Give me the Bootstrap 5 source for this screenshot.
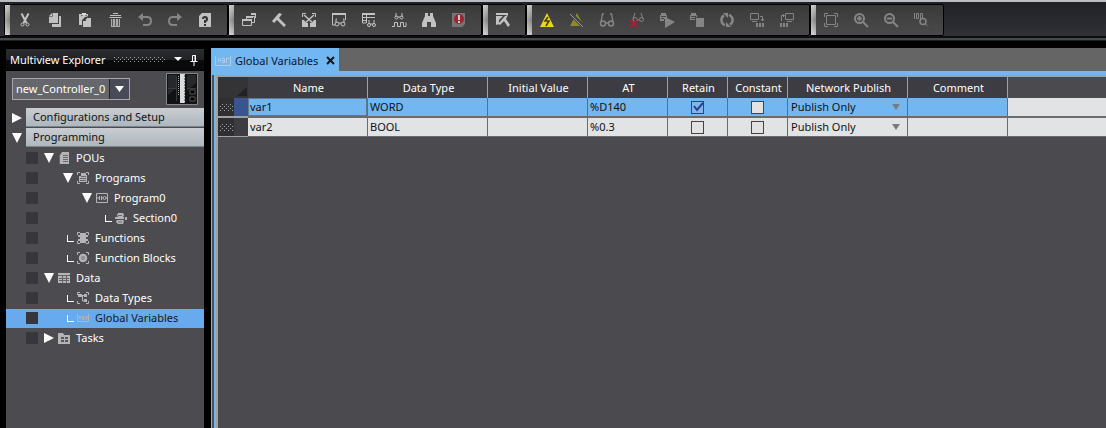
<!DOCTYPE html>
<html lang="en">
<head>
<meta charset="utf-8">
<meta name="viewport" content="width=device-width, initial-scale=1">
<title>Global Variables</title>
<link href="https://cdn.jsdelivr.net/npm/bootstrap@5.3.0/dist/css/bootstrap.min.css" rel="stylesheet">
<style>
body{background:#000;color:#fff;font-family:"Noto Sans","Open Sans",sans-serif;font-size:11px;line-height:16px}
svg{display:block;fill:none;stroke:currentColor}
button{background:none;border:0;padding:0;color:inherit}
.toolbar{height:41px;background:linear-gradient(#b9bcc3 0 2px,#202126 2px,#303137 36px,#0b0c0d 36px 38px,#454a4b 38px 40px,#1c1f1f 40px);padding:4px 0 0 4px}
.tool-group{height:32px;border:1px solid #000;border-radius:2px;background:linear-gradient(#3a3a3a,#4a4a4a);padding-right:7px}
.grip{width:5px;background:linear-gradient(90deg,rgba(255,255,255,.3),transparent),linear-gradient(#bbb,#808080 50%,#c4c4c4)}
.tool{width:30px;color:#c2c2c2;display:flex;align-items:center;justify-content:center}
.tool:disabled{color:#858585}
.tool svg{width:16px;height:16px}
.workspace{padding:7px 0 0 6px}
.explorer{width:198px;background:#4c4b50;margin-right:7px;padding-top:1px;box-shadow:inset 0 1px #000}
.explorer-title{height:22px;background:linear-gradient(#2c2d30,#222326 50%,#0a0a0b 55%,#08090a);border-bottom:1px solid #000;padding:0 6px 0 4px}
.controller{height:37px;padding:2px 6px 0}
.controller-select{width:118px;height:22px;margin-top:5px;border:1px solid #a7a7a9;border-radius:0;color:#fff;padding:0 0 1px 3px;font-size:11px;appearance:none;background:url("data:image/svg+xml,%3Csvg xmlns='http://www.w3.org/2000/svg' width='20' height='20'%3E%3Cpath d='M0 0h20v20H0z' fill='%23484b57'/%3E%3Cpath d='M0 0h1v20H0z' fill='%23222'/%3E%3Cpath d='M6 7h9l-4.500 6z' fill='%23fff'/%3E%3C/svg%3E") right/20px 20px no-repeat #66676c}
.section-row{height:20px;padding-left:6px}
.section-row .label{height:19px;margin-left:4px;padding-left:7px;background:linear-gradient(#c9cdd1,#adb7be);color:#111;border-bottom:1px solid #7d858c;text-align:left}
.arrow{width:10px;height:12px;flex:none}
.arrow svg{width:10px;height:12px;fill:#fff;stroke:none}
.tree{margin:0;padding:0;list-style:none}
.tree li{height:20px;padding:0 0 0 20px;display:flex;align-items:center}
.tree li::before{content:"";width:12px;height:12px;background:#37363c;flex:none;margin-right:6px}
.tree a{color:#fff;text-decoration:none}
.tree .selected{background:linear-gradient(#4c4b50 1px,#68aaee 1px)}
.tree .selected a{color:#101820}
.ind1{margin-left:19px}.ind2{margin-left:38px}
.node-icon{width:12px;height:12px;margin:0 6px 0 4px;color:#b5b5b7;flex:none}
.elbow{width:7px;height:7px;border:solid #fff;border-width:0 0 1px 1px;flex:none;margin-right:3px;margin-left:23px}
.elbow + .node-icon{margin-left:0}
.elbow.deep{margin-left:61px}
.tabs{height:23px;background:#656565}
.tab{width:128px;height:23px;background:#72b7f2;color:#10161c;padding:2px 4px 0}
.tab .name{margin-left:4px}
.var-icon{color:#b5cce0}
.editor{background:#4b4a4f;border-left:1px solid #72b7f2}
.editor-inner{border-left:2px solid #4b5158}
.band-top{border-top:4px solid #72b7f2}
.band-left{border-left:2px solid #72b7f2}
.grid-wrap{border:solid #a0a1a3;border-width:2px 0 0 2px}
.vars{width:100%;table-layout:fixed;border-collapse:separate;border-spacing:0;color:#111}
.vars th{height:21px;background:#3c3c42;color:#fff;font-weight:400;text-align:center;padding:0 0 0 2px;border-right:1px solid #a0a0a0;white-space:nowrap}
.vars th:last-child{background:#4b4a4f;border:0}
.vars th:first-child,.vars th.corner{background:#343437;border:0}
.vars td{height:20px;padding:0 0 0 2px;background:#e2e3e5;border-right:1px solid #6b6b6e;border-bottom:2px solid #6b6b6e;white-space:nowrap}
.vars td:last-child{border-right:0}
.vars tr:last-child td{height:19px;border-bottom-width:1px}
.vars .current td{background:#72b7f2}
.vars .current td:last-child{background:#e2e3e5}
.vars td.handle,.vars .current td.handle{background:#2f2f31;border-right:0;padding:0;border-bottom-color:#a0a0a0}
.vars td.marker{background:#3c3c42;border-right:0;border-bottom-color:#a0a0a0}
.vars .current td.marker{background:#39548f}
.vars td.editing{box-shadow:inset 0 0 0 1px #62788b}
.vars td.tick{padding:0;text-align:center}
.tick input{appearance:none;display:block;width:13px;height:13px;margin:0 auto;border:1px solid #444;background:#e2e2e2}
.tick input:checked{background:url("data:image/svg+xml,%3Csvg xmlns='http://www.w3.org/2000/svg' viewBox='0 0 11 11'%3E%3Cpath d='M2 4l3 4 6-7' fill='none' stroke='%23253f94' stroke-width='2'/%3E%3C/svg%3E") #83b5e6}
.publish{width:100%;height:16px;border:0;padding:0 0 0 1px;color:#111;font-size:11px;line-height:16px;appearance:none;display:block;background:url("data:image/svg+xml,%3Csvg xmlns='http://www.w3.org/2000/svg' width='8' height='6'%3E%3Cpath d='M0 0h8l-4 6z' fill='%23777c82'/%3E%3C/svg%3E") right 7px center no-repeat transparent}
</style>
</head>
<body class="vh-100 d-flex flex-column overflow-hidden">
<svg width="0" height="0" class="position-absolute" aria-hidden="true"><defs>
<pattern id="dotFill" width="4" height="4" patternUnits="userSpaceOnUse"><path d="M0 0h1v1H0zM2 2h1v1H2z" fill="#a4a4a6" stroke="none"/></pattern>
</defs></svg>
<header class="toolbar d-flex flex-shrink-0" role="toolbar">
<div class="tool-group d-flex"><span class="grip"></span>
<button class="tool" aria-label="Cut"><svg viewBox="0 0 16 16"><path d="M4.500 1.500L9.500 11M11.500 1.500L6.500 11" stroke-width="2"/><circle cx="5.500" cy="12.500" r="1.500"/><circle cx="10.500" cy="12.500" r="1.500"/></svg></button>
<button class="tool" aria-label="Copy"><svg viewBox="0 0 16 16"><path fill="currentColor" stroke="none" d="M5 1h6v10H2V4zM12 4h2v11H5v-3h7z"/><path d="M2 4.500h3.500V1" stroke="#777"/></svg></button>
<button class="tool" aria-label="Paste"><svg viewBox="0 0 16 16"><path fill="currentColor" stroke="none" d="M2 2h9v3H8L5 8v5H2zM9 6h5v9H6V9h3z"/><path d="M4 4l3-2 4 3-3 3" stroke="#555"/><path d="M5 1h4v2H5z" fill="#ddd" stroke="none"/></svg></button>
<button class="tool" aria-label="Delete"><svg viewBox="0 0 16 16"><path d="M3 3.500h11M6 1.500h5M2.500 5.500h12"/><path fill="#aaa" stroke="none" d="M4 7h9v8H4z"/><path d="M5.500 7v7M8.500 7v7M11.500 7v7" stroke="#555"/></svg></button>
<button class="tool" aria-label="Undo" disabled><svg viewBox="0 0 16 16"><path d="M3 5h7q4 0 4 4t-4 4H6" stroke-width="2"/><path fill="currentColor" stroke="none" d="M1 5l5-4v8z"/></svg></button>
<button class="tool" aria-label="Redo" disabled><svg viewBox="0 0 16 16"><path d="M13 5H6q-4 0-4 4t4 4h4" stroke-width="2"/><path fill="currentColor" stroke="none" d="M15 5l-5-4v8z"/></svg></button>
<button class="tool" aria-label="Help"><svg viewBox="0 0 16 16"><path fill="currentColor" stroke="none" d="M5 1h9v14H2V4z"/><path d="M6 7q0-2 2-2t2 2-2 2v2M8 12v2" stroke="#333" stroke-width="2"/></svg></button>
</div>
<div class="tool-group d-flex"><span class="grip"></span>
<button class="tool" aria-label="Windows"><svg viewBox="0 0 16 16"><path d="M5.500 7V4.500h8v6H11M1.500 7.500h9v6h-9zM14.500 2v4"/><path d="M5 5h7M1 8h10M10 2h5" stroke-width="2"/></svg></button>
<button class="tool" aria-label="Build"><svg viewBox="0 0 16 16"><path fill="currentColor" stroke="none" d="M1 9l7-8 3 1-3 4 7 7-2 2-7-7-3 3z"/></svg></button>
<button class="tool" aria-label="Cross reference"><svg viewBox="0 0 16 16"><path d="M3 3l10 9M13 3L3 12" stroke-width="1.500"/><path d="M1.500 5V1.500H5M11 1.500h3.500V5"/><path fill="currentColor" stroke="none" d="M1 8h2l2 3h2v4H1zM15 8h-2l-2 3H9v4h6z"/></svg></button>
<button class="tool" aria-label="Watch"><svg viewBox="0 0 16 16"><path d="M1 2h14" stroke-width="2"/><path d="M1.500 3v10H4M14.500 3v5M6 7H5v4M12 7h1v4M8 11h2"/><circle cx="6" cy="12" r="2"/><circle cx="12" cy="12" r="2"/></svg></button>
<button class="tool" aria-label="Watch table"><svg viewBox="0 0 16 16"><path d="M1 2h13" stroke-width="2"/><path d="M1.500 3v8H5M1 5.500h13M1 8.500h5M5.500 3v8M8 8v4M13 8v4M9 12h3"/><circle cx="8" cy="13" r="1.500"/><circle cx="13" cy="13" r="1.500"/></svg></button>
<button class="tool" aria-label="Data trace"><svg viewBox="0 0 16 16"><path d="M5 1v4M11 1v4M7 5h2M1 14.500h2.500v-4h3v4h3v-4h3v4H15v-4"/><circle cx="5.500" cy="5.500" r="1.500"/><circle cx="10.500" cy="5.500" r="1.500"/></svg></button>
<button class="tool" aria-label="Search"><svg viewBox="0 0 16 16"><path fill="currentColor" stroke="none" d="M4 1h3v3h2V1h3v3l3 7v4h-5v-5H6v5H1v-4l3-7z"/></svg></button>
<button class="tool" aria-label="Errors"><svg viewBox="0 0 16 16"><path fill="#767676" stroke="none" d="M1 1h13v11l-3 3H1z"/><circle cx="8" cy="7" r="5" fill="#9c2730" stroke="none"/><path d="M8 3v5M8 9v2" stroke="#ccc" stroke-width="2"/></svg></button>
</div>
<div class="tool-group d-flex"><span class="grip"></span>
<button class="tool" aria-label="Troubleshoot"><svg viewBox="0 0 16 16"><path d="M1 2h12" stroke-width="2"/><path fill="currentColor" stroke="none" d="M1 4h7L4 8v4l-3 1zM3 12l7-8 3-1-2 4 4 6-2 2-4-6-4 4z"/></svg></button>
</div>
<div class="tool-group d-flex"><span class="grip"></span>
<button class="tool" aria-label="Online"><svg viewBox="0 0 16 16"><path fill="#ecd51d" stroke="none" d="M8 1l7 14H1z"/><path d="M9 5L6 9h4l-3 5" stroke="#403a10" stroke-width="1.500"/></svg></button>
<button class="tool" aria-label="Offline" disabled><svg viewBox="0 0 16 16"><path fill="#91882b" stroke="none" d="M8 1l7 13H1z"/><path d="M2 2l13 13" stroke="#444" stroke-width="4"/><path d="M1 2l13 13" stroke="#999"/></svg></button>
<button class="tool" aria-label="Monitor" disabled><svg viewBox="0 0 16 16"><path d="M5 2H3.500L2 10M11 2h1.500L14 10M6 11h4" stroke-width="1.300"/><circle cx="4" cy="11.500" r="2.500" stroke-width="1.500"/><circle cx="12" cy="11.500" r="2.500" stroke-width="1.500"/></svg></button>
<button class="tool" aria-label="Stop monitor" disabled><svg viewBox="0 0 16 16"><path d="M6 1L4 7M12 1l2 6M8 8h2"/><circle cx="6" cy="7.500" r="2"/><circle cx="12.500" cy="7.500" r="2"/><path d="M1 8l7 7M8 8l-7 7" stroke="#a51f39" stroke-width="2"/></svg></button>
<button class="tool" aria-label="Run" disabled><svg viewBox="0 0 16 16"><path fill="currentColor" stroke="none" d="M2 1h5v2h1v6H1V3h1zM6 5l10 5-10 6z"/><path d="M2 4.500h5M2 6.500h3M5.500 7v8" stroke="#444"/></svg></button>
<button class="tool" aria-label="Stop" disabled><svg viewBox="0 0 16 16"><path fill="currentColor" stroke="none" d="M2 1h5v2h1v5H1V3h1zM7 6h8v9H7z"/><path d="M2 4.500h5M2 6.500h4M6.500 6v9M6 5.500h9" stroke="#444"/></svg></button>
<button class="tool" aria-label="Synchronize" disabled><svg viewBox="0 0 16 16"><path d="M6 13.200A5.500 5.500 0 0 1 5 3.400M10 2.800a5.500 5.500 0 0 1 1 9.800" stroke-width="2.500"/><path fill="currentColor" stroke="none" d="M4 1h5v5zM12 15H7v-5z"/></svg></button>
<button class="tool" aria-label="Transfer to controller" disabled><svg viewBox="0 0 16 16"><path d="M1.500 1.500h8v6h-8zM3 9.500h5M11 4.500h2.500V8M12 7l1.500 2L15 7"/><path fill="currentColor" stroke="none" d="M7 11h2v4H7zM10 11h2v4h-2zM13 11h2v4h-2z"/></svg></button>
<button class="tool" aria-label="Transfer from controller" disabled><svg viewBox="0 0 16 16"><path d="M6.500 1.500h8v6h-8zM8 9.500h5M2.500 9V3.500H5M4 2l1.500 1.500L4 5"/><path fill="currentColor" stroke="none" d="M1 11h2v4H1zM4 11h2v4H4zM7 11h2v4H7z"/></svg></button>
</div>
<div class="tool-group d-flex"><span class="grip"></span>
<button class="tool" aria-label="Fit" disabled><svg viewBox="0 0 16 16"><path d="M3.500 3.500h9v9h-9zM1.500 5V1.500H5M11 1.500h3.500V5M1.500 11v3.500H5M11 14.500h3.500V11"/></svg></button>
<button class="tool" aria-label="Zoom in" disabled><svg viewBox="0 0 16 16"><circle cx="6.500" cy="6.500" r="4.500" stroke-width="2"/><path d="M4 6.500h5M6.500 4v5M10 10l5 5" stroke-width="2"/></svg></button>
<button class="tool" aria-label="Zoom out" disabled><svg viewBox="0 0 16 16"><circle cx="6.500" cy="6.500" r="4.500" stroke-width="2"/><path d="M4 6.500h5M10 10l5 5" stroke-width="2"/></svg></button>
<button class="tool" aria-label="Zoom 100%" disabled><svg viewBox="0 0 16 16"><path d="M1.500 1v6M3.500 1.500h2v5h-2zM7.500 1.500h2v5h-2zM12 11.500l3 3" stroke-width="1"/><circle cx="10" cy="9.500" r="3" fill="#444" stroke-width="1.500"/></svg></button>
</div>
</header>

<div class="workspace d-flex flex-grow-1">
<aside class="explorer flex-shrink-0">
<div class="explorer-title d-flex align-items-center"><span class="flex-shrink-0">Multiview Explorer</span>
<svg class="ms-auto" width="52" height="5" aria-hidden="true"><rect width="52" height="5" fill="url(#dotFill)" stroke="none"/></svg>
<button class="ms-2" aria-label="Panel menu"><svg width="8" height="5"><path d="M0 0h8L4 4z" fill="#fff" stroke="none"/></svg></button>
<button class="ms-2" aria-label="Pin panel"><svg width="8" height="12"><path d="M2.500 7V1.500h3V7M.5 7.500h7M4 8v4"/><path d="M5 1v6"/></svg></button>
</div>
<div class="controller d-flex justify-content-between align-items-start">
<select class="controller-select" aria-label="Controller"><option>new_Controller_0</option></select>
<svg width="32" height="32" viewBox="0 0 32 32" role="img" aria-label="Controller unit"><path d="M.5.500h31v31H.5z" fill="#111213" stroke="#85868a"/><path d="M2 2h9v12L2 22zM21 2h9v8l-9 8z" fill="#26282a" stroke="none"/><path d="M2 15.500h8M10.500 4v24M21 15.500h9" stroke="#393b3d"/><path d="M14 1h5v29h-5z" fill="#dcdcdc" stroke="none"/><path d="M12.500 3v19" stroke="#aaa" stroke-dasharray="1 1"/><path d="M18.500 2v28" stroke="#888" stroke-dasharray="2 1"/><path d="M24 17h5v4h-5zM24 24h5v4h-5z" fill="#000" stroke="#555"/></svg>
</div>
<div class="section-row d-flex"><button class="arrow mt-1" aria-label="Expand"><svg viewBox="0 0 10 12"><path d="M0 1l10 5-10 5z"/></svg></button><button class="label flex-grow-1">Configurations and Setup</button></div>
<div class="section-row d-flex"><button class="arrow mt-1" aria-label="Collapse"><svg viewBox="0 0 10 12"><path d="M0 1h10L5 11z"/></svg></button><button class="label flex-grow-1">Programming</button></div>
<ul class="tree">
<li><button class="arrow" aria-label="Collapse"><svg viewBox="0 0 10 12"><path d="M0 1h10L5 11z"/></svg></button><svg class="node-icon" viewBox="0 0 12 12"><path fill="currentColor" stroke="none" d="M4 0h7v12H2V3z"/><path d="M1.500 3v9M5 3.500h5M5 5.500h5M5 7.500h5M5 9.500h5" stroke="#68686c"/></svg><a href="#">POUs</a></li>
<li><button class="arrow ind1" aria-label="Collapse"><svg viewBox="0 0 10 12"><path d="M0 1h10L5 11z"/></svg></button><svg class="node-icon" viewBox="0 0 12 12"><path d="M.5 3V.5H3M9 .5h2.500V3M.5 9v2.500H3M9 11.500h2.500V9"/><path fill="currentColor" stroke="none" d="M4 1h5v2h1v7H2V4h2z"/><path d="M4 4.500h5M3 6.500h6M3 8.500h6" stroke="#68686c"/></svg><a href="#">Programs</a></li>
<li><button class="arrow ind2" aria-label="Collapse"><svg viewBox="0 0 10 12"><path d="M0 1h10L5 11z"/></svg></button><svg class="node-icon" viewBox="0 0 12 12"><path d="M.5 1.500h11v9H.5zM1 6h2M3.500 4v4M5.500 4v4M5 6h2M10 6h1"/><circle cx="8.500" cy="6" r="1.500"/></svg><a href="#">Program0</a></li>
<li><span class="elbow deep"></span><svg class="node-icon" viewBox="0 0 12 12"><path fill="currentColor" stroke="none" d="M3 1h5l1 2-1 2H3L2 3zM0 5h9v2H0zM2 8h6l1 1-1 3H3L1 10zM10 5h2v3h-2z"/><path d="M3 3.500h4M3 10h4" stroke="#68686c"/></svg><a href="#">Section0</a></li>
<li><span class="elbow"></span><svg class="node-icon" viewBox="0 0 12 12"><path d="M.5 3V.5H3M9 .5h2.500V3M.5 9v2.500H3M9 11.500h2.500V9"/><path fill="currentColor" stroke="none" d="M3 1h6v10H3zM1 3h10v2H1zM1 7h10v2H1z"/></svg><a href="#">Functions</a></li>
<li><span class="elbow"></span><svg class="node-icon" viewBox="0 0 12 12"><path d="M.5 3V.5H3M9 .5h2.500V3M.5 9v2.500H3M9 11.500h2.500V9"/><circle cx="6" cy="6" r="3" stroke-width="2.500"/><circle cx="6" cy="6" r="1"/></svg><a href="#">Function Blocks</a></li>
<li><button class="arrow" aria-label="Collapse"><svg viewBox="0 0 10 12"><path d="M0 1h10L5 11z"/></svg></button><svg class="node-icon" viewBox="0 0 12 12"><path fill="currentColor" stroke="none" d="M0 1h12v10H0z"/><path d="M0 3.500h12M1 6.500h10M1 8.500h10M4.500 4v7M8.500 4v7" stroke="#626267"/></svg><a href="#">Data</a></li>
<li><span class="elbow"></span><svg class="node-icon" viewBox="0 0 12 12"><path d="M.5 3V.5H3M9 .5h2.500V3M.5 9v2.500H3M9 11.500h2.500V9M3 3.500h6M5.500 3v6H9"/><path fill="currentColor" stroke="none" d="M1 2h4v3H1zM7 2h3v3H7zM7 7h3v3H7z"/></svg><a href="#">Data Types</a></li>
<li class="selected"><span class="elbow"></span><svg class="node-icon" viewBox="0 0 12 12"><path d="M.5 2v8M11.500 2v8M0 9.500h12M2 4l1 3 1-3M5 4.500h2v3H5.500V6H7M9.500 8V4.500H11"/></svg><a href="#" aria-current="page">Global Variables</a></li>
<li><button class="arrow" aria-label="Expand"><svg viewBox="0 0 10 12"><path d="M0 1l10 5-10 5z"/></svg></button><svg class="node-icon" viewBox="0 0 12 12"><path fill="currentColor" stroke="none" d="M0 1h5l1 2h6v9H0z"/><path d="M3 5h3v2H3zM7 5h3v2H7zM3 8h3v2H3zM7 8h3v2H7z" fill="#55555a" stroke="none"/></svg><a href="#">Tasks</a></li>
</ul>
</aside>

<main class="flex-grow-1 d-flex flex-column overflow-hidden">
<div class="tabs d-flex flex-shrink-0"><div class="tab d-flex align-items-center"><svg width="16" height="12" viewBox="0 0 16 12" class="var-icon flex-shrink-0"><path d="M.5 1v9.500h15V1M3 3l1.500 4L6 3M7 3.500h2.500v4h-2v-2h2M11.500 8V3.500H14"/></svg><span class="name flex-grow-1 text-nowrap">Global Variables</span><button aria-label="Close tab"><svg width="9" height="9" viewBox="0 0 9 9"><path d="M1 1l7 7M8 1L1 8" stroke-width="2"/></svg></button></div></div>
<div class="editor flex-grow-1 d-flex flex-column"><div class="band-top flex-grow-1 d-flex flex-column"><div class="editor-inner flex-grow-1 d-flex flex-column"><div class="band-left flex-grow-1 d-flex flex-column"><div class="grid-wrap flex-grow-1">
<table class="vars">
<colgroup><col style="width:16px"><col style="width:14px"><col style="width:120px"><col style="width:120px"><col style="width:100px"><col style="width:80px"><col style="width:60px"><col style="width:60px"><col style="width:120px"><col style="width:100px"><col></colgroup>
<thead><tr><th></th><th class="corner"><svg class="mt-2" width="12" height="10"><path d="M11 0v9H1z" fill="#222225" stroke="none"/></svg></th><th>Name</th><th>Data Type</th><th>Initial Value</th><th>AT</th><th>Retain</th><th>Constant</th><th>Network Publish</th><th>Comment</th><th></th></tr></thead>
<tbody>
<tr class="current"><td class="handle"><svg width="15" height="7"><rect x="1" width="14" height="7" fill="url(#dotFill)" stroke="none"/></svg></td><td class="marker"></td><td class="editing">var1</td><td>WORD</td><td></td><td>%D140</td><td class="tick"><input type="checkbox" aria-label="var1 retain" checked></td><td class="tick"><input type="checkbox" aria-label="var1 constant"></td><td><select class="publish" aria-label="var1 network publish"><option>Publish Only</option></select></td><td></td><td></td></tr>
<tr><td class="handle"><svg width="15" height="7"><rect x="1" width="14" height="7" fill="url(#dotFill)" stroke="none"/></svg></td><td class="marker"></td><td>var2</td><td>BOOL</td><td></td><td>%0.3</td><td class="tick"><input type="checkbox" aria-label="var2 retain"></td><td class="tick"><input type="checkbox" aria-label="var2 constant"></td><td><select class="publish" aria-label="var2 network publish"><option>Publish Only</option></select></td><td></td><td></td></tr>
</tbody>
</table>
</div></div></div></div></div>
</main>
</div>
<script src="https://cdn.jsdelivr.net/npm/bootstrap@5.3.0/dist/js/bootstrap.bundle.min.js"></script>
</body>
</html>
